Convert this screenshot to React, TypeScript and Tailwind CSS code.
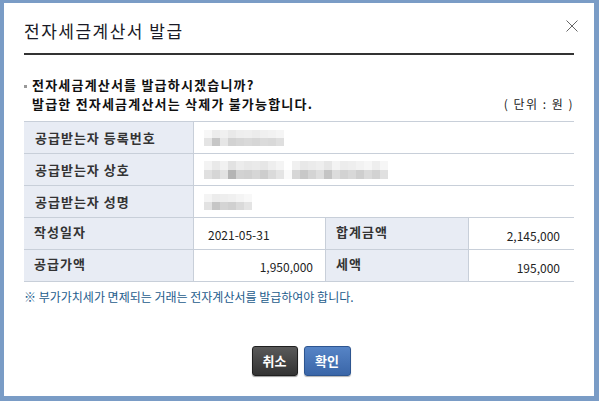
const font = { fontFamily: '"Noto Sans CJK KR", "Noto Sans", sans-serif' }

// pixelated placeholders standing in for masked values
const blur1 = {
  top: ['#f7f7f7', '#ececec', '#f0f0f0', '#e9e9e9', '#eeeeee', '#efefef', '#ececec', '#f0f0f0', '#f2f2f2', '#f5f5f5'],
  bottom: ['#e4e4e4', '#c6c6c6', '#e6e6e6', '#d2d2d2', '#d6d6d6', '#d9d9d9', '#d6d6d6', '#dbdbdb', '#d9d9d9', '#dfdfdf'],
}
const blur2 = {
  top: ['#f3f3f3', '#e9e9e9', '#f1f1f1', '#e2e2e2', '#ececec', '#e8e8e8', '#eaeaea', '#e6e6e6', '#eeeeee', '#f4f4f4', '#ffffff', '#f0f0f0', '#e8e8e8', '#ebebeb', '#eeeeee', '#e6e6e6', '#f3f3f3', '#ececec', '#eeeeee', '#f2f2f2', '#f6f6f6', '#eeeeee', '#f6f6f6'],
  bottom: ['#e0e0e0', '#d6d6d6', '#e2e2e2', '#b4b4b4', '#d2d2d2', '#d0d0d0', '#d6d6d6', '#cdcdcd', '#dadada', '#e4e4e4', '#fafafa', '#d6d6d6', '#c8c8c8', '#d4d4d4', '#dedede', '#c4c4c4', '#dcdcdc', '#d2d2d2', '#d8d8d8', '#cecece', '#dadada', '#d2d2d2', '#e0e0e0'],
}
const blur3 = {
  top: ['#f4f4f4', '#ececec', '#eeeeee', '#f0f0f0', '#f4f4f4', '#f8f8f8'],
  bottom: ['#e2e2e2', '#c6c6c6', '#d4d4d4', '#d0d0d0', '#dadada', '#e4e4e4'],
}

function Blur({ data, h }: { data: { top: string[]; bottom: string[] }; h: number }) {
  return (
    <div className="flex flex-col">
      {[data.top, data.bottom].map((row, i) => (
        <div key={i} className="flex">
          {row.map((c, j) => (
            <div key={j} className="w-[8px]" style={{ backgroundColor: c, height: h }} />
          ))}
        </div>
      ))}
    </div>
  )
}

const label = 'flex items-center border-b border-r border-[#c8cfd9] bg-[#e8ecf4] pl-[11px] text-[13px] font-bold tracking-[1px] text-[#333]'
const labelTop = 'flex items-start border-b border-r border-[#c8cfd9] bg-[#e8ecf4] pt-[4px] pl-[10px] text-[13px] font-bold tracking-[1px] text-[#333]'
const value = 'flex items-center border-b border-[#c8cfd9] bg-white text-[12px] text-[#222]'

export default function App() {
  return (
    <div className="h-[401px] w-[599px] bg-[#7a9cc6] pt-[3px] pr-[5px] pb-[5px] pl-[4px]" style={font}>
      <div className="flex h-full flex-col bg-white px-[20px]">
        <div className="flex items-start justify-between border-b-2 border-[#333] pt-[18px] pb-[12px]">
          <h1 className="text-[17px] leading-[20px] tracking-[1.5px] text-[#1a1a26]">전자세금계산서 발급</h1>
          <button className="-mr-[4px] mt-[-1px]">
            <svg width="12" height="12" viewBox="0 0 12 12" stroke="#666" strokeWidth="1" fill="none">
              <path d="M0.5 0.5 11.5 11.5 M11.5 0.5 0.5 11.5" />
            </svg>
          </button>
        </div>

        <div className="mt-[20px] text-[13px] leading-[19px] font-bold tracking-[1.2px] text-[#111]">
          <div className="flex items-center">
            <span className="mt-[3px] mr-[5px] h-[3px] w-[3px] bg-[#999]" />
            전자세금계산서를 발급하시겠습니까?
          </div>
          <div className="flex items-center justify-between pl-[8px]">
            <span>발급한 전자세금계산서는 삭제가 불가능합니다.</span>
            <span className="text-[12px] font-normal tracking-[1.5px] text-[#222]">( 단위 : 원 )</span>
          </div>
        </div>

        <div className="mt-[8px] grid grid-cols-[170px_132px_143px_1fr] grid-rows-[32px_32px_32px_32px_32px] border-t border-[#c8cfd9]">
          <div className={label}>공급받는자 등록번호</div>
          <div className={`${value} col-span-3 pl-[10px]`}>
            <Blur data={blur1} h={8} />
          </div>
          <div className={label}>공급받는자 상호</div>
          <div className={`${value} col-span-3 pl-[10px]`}>
            <Blur data={blur2} h={9} />
          </div>
          <div className={label}>공급받는자 성명</div>
          <div className={`${value} col-span-3 pl-[10px]`}>
            <Blur data={blur3} h={8} />
          </div>

          <div className={labelTop}>작성일자</div>
          <div className={`${value} border-r pt-[3px] pl-[14px]`}>2021-05-31</div>
          <div className={labelTop}>합계금액</div>
          <div className={`${value} justify-end pt-[5px] pr-[14px]`}>2,145,000</div>

          <div className={labelTop}>공급가액</div>
          <div className={`${value} justify-end border-r pt-[3px] pr-[12px]`}>1,950,000</div>
          <div className={labelTop}>세액</div>
          <div className={`${value} justify-end pt-[5px] pr-[14px]`}>195,000</div>
        </div>

        <p className="mt-[7px] text-[12px] leading-[16px] text-[#1d5c8c]">
          ※ 부가가치세가 면제되는 거래는 전자계산서를 발급하여야 합니다.
        </p>

        <div className="mt-auto flex justify-center gap-[6px] pb-[20px] pl-[4px]">
          <button className="h-[30px] w-[46px] rounded-[3px] border border-[#1f1f1f] bg-gradient-to-b from-[#5a5a5a] to-[#333] text-[13px] font-bold text-white shadow-[0_1px_1px_rgba(0,0,0,0.4)]">
            취소
          </button>
          <button className="h-[30px] w-[47px] rounded-[3px] border border-[#2d5590] bg-gradient-to-b from-[#5684c6] to-[#3a66a8] text-[13px] font-bold text-white shadow-[0_1px_1px_rgba(0,0,0,0.3)]">
            확인
          </button>
        </div>
      </div>
    </div>
  )
}
